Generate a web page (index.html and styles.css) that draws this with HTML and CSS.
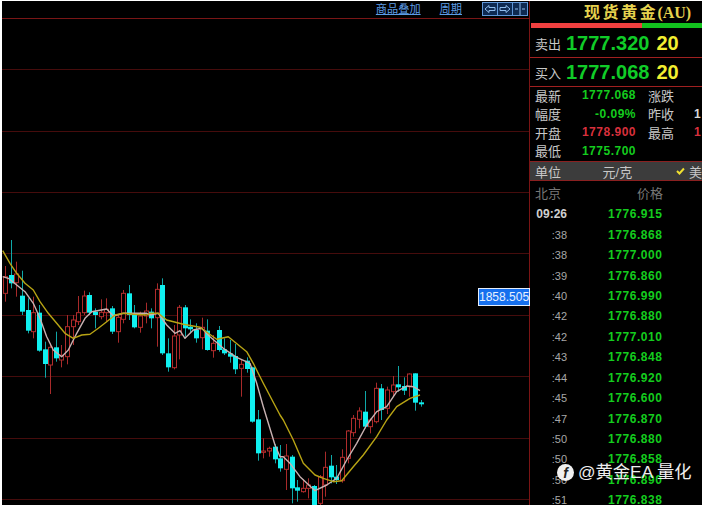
FILE: index.html
```html
<!DOCTYPE html>
<html lang="zh-CN">
<head>
  <meta charset="UTF-8">
  <title>现货黄金</title>
  <link rel="stylesheet" href="styles.css">
</head>
<body>
  <div class="app">

    <!-- K线图 -->
    <div class="chart">
      <div class="toolbar">
        <a class="tool-link">商品叠加</a>
        <a class="tool-link">周期</a>
        <svg class="tool-btns" width="46" height="14" viewBox="0 0 46 14">
          <rect x="0.5" y="0.5" width="15" height="13" class="btn-box"/>
          <rect x="15.5" y="0.5" width="15" height="13" class="btn-box"/>
          <rect x="30.5" y="0.5" width="15" height="13" class="btn-box"/>
          <path d="M3 7 L7 3.5 V5.5 H13 V8.5 H7 V10.5 Z" class="btn-line"/>
          <path d="M28 7 L24 3.5 V5.5 H18 V8.5 H24 V10.5 Z" class="btn-line"/>
          <path d="M33 7 H36 M40 7 H43 M38 1 V13" class="btn-line"/>
        </svg>
      </div>
      <svg id="kline" class="kline" width="527" height="486" viewBox="2 19 527 486"></svg>
      <div class="price-tag">1858.505</div>
    </div>

    <!-- 右侧报价 -->
    <div class="panel">
      <div class="title">现货黄金<span class="title-code">(AU)</span></div>
      <div class="ratio"><div class="ratio-sell"></div><div class="ratio-buy"></div></div>

      <div class="quote">
        <span class="quote-label">卖出</span>
        <span class="quote-price">1777.320</span>
        <span class="quote-size">20</span>
      </div>
      <div class="quote">
        <span class="quote-label">买入</span>
        <span class="quote-price">1777.068</span>
        <span class="quote-size">20</span>
      </div>

      <div class="stats">
        <span>最新</span><b class="green">1777.068</b><i></i><span>涨跌</span><b></b>
        <span>幅度</span><b class="green">-0.09%</b><i></i><span>昨收</span><b class="white">1</b>
        <span>开盘</span><b class="red">1778.900</b><i></i><span>最高</span><b class="red">1</b>
        <span>最低</span><b class="green">1775.700</b><i></i><span></span><b></b>
      </div>

      <div class="unit">
        <span class="unit-name">单位</span>
        <span class="unit-value">元/克</span>
        <svg class="unit-check" width="9" height="8" viewBox="0 0 9 8"><path d="M1 4 L3.5 6.5 L8 1.5"/></svg>
        <span>美</span>
      </div>

      <div class="ticks-head"><span>北京</span><span>价格</span></div>
      <div class="tick"><span class="tick-first">09:26</span><b>1776.915</b></div>
      <div class="tick"><span>:38</span><b>1776.868</b></div>
      <div class="tick"><span>:38</span><b>1777.000</b></div>
      <div class="tick"><span>:39</span><b>1776.860</b></div>
      <div class="tick"><span>:40</span><b>1776.990</b></div>
      <div class="tick"><span>:42</span><b>1776.880</b></div>
      <div class="tick"><span>:42</span><b>1777.010</b></div>
      <div class="tick"><span>:43</span><b>1776.848</b></div>
      <div class="tick"><span>:44</span><b>1776.920</b></div>
      <div class="tick"><span>:45</span><b>1776.600</b></div>
      <div class="tick"><span>:47</span><b>1776.870</b></div>
      <div class="tick"><span>:50</span><b>1776.880</b></div>
      <div class="tick"><span>:50</span><b>1776.858</b></div>
      <div class="tick"><span>:50</span><b>1776.890</b></div>
      <div class="tick"><span>:51</span><b>1776.838</b></div>
    </div>

    <!-- 水印 -->
    <div class="watermark"><span class="wm-logo">f</span>@黄金EA 量化</div>
  </div>

  <script src="chart.js"></script>
</body>
</html>
```

FILE: styles.css
```css
* { margin: 0; padding: 0; box-sizing: border-box; }
body { background: #fff; overflow: hidden; font-family: "Liberation Sans", "Noto Sans CJK SC", sans-serif; }

.app {
  position: relative;
  display: flex;
  width: 700px;
  height: 504px;
  margin: 1px 0 0 2px;
  background: #000;
  overflow: hidden;
}

/* chart */
.chart { position: relative; width: 527px; flex: none; }

.toolbar {
  display: flex;
  justify-content: flex-end;
  align-items: flex-start;
  gap: 19px;
  height: 18px;
  padding-top: 1px;
  padding-right: 1px;
  border-bottom: 1px solid #7a1616;
}

.tool-link {
  font-size: 11.2px;
  line-height: 15px;
  color: #5c9ce6;
  text-decoration: underline;
}

.tool-btns { margin-left: 1px; }
.btn-box { fill: #0e2a52; stroke: #5f96d8; }
.btn-line { fill: none; stroke: #8fbcec; stroke-width: 1; }

.kline { display: block; }

.price-tag {
  position: absolute;
  left: 476px;
  top: 287px;
  width: 52px;
  height: 18px;
  background: #1670ee;
  border: 1px solid #e6eefa;
  color: #e8f2ff;
  font-size: 12px;
  line-height: 16px;
  text-align: center;
  white-space: nowrap;
}

/* quote panel */
.panel {
  flex: 1;
  min-width: 0;
  border-left: 1px solid #7a1414;
  color: #c8c8c8;
  overflow: hidden;
}

.title {
  height: 22px;
  padding-left: 54px;
  color: #e6d24e;
  font-family: "Liberation Serif", "Noto Sans CJK SC", serif;
  font-size: 16px;
  font-weight: bold;
  letter-spacing: 2.6px;
  line-height: 24px;
  white-space: nowrap;
}

.title-code { font-size: 16px; letter-spacing: 0; margin-left: -1px; }

.ratio { display: flex; height: 5px; margin: 0 0 1px 1px; }
.ratio-sell { width: 111px; background: #f04040; }
.ratio-buy { flex: 1; background: #12c21e; }

.quote {
  display: flex;
  align-items: center;
  gap: 5px;
  height: 29px;
  padding: 1px 0 0 5px;
  border-bottom: 1px solid #a02020;
  white-space: nowrap;
}

.quote-label { flex: none; width: 26px; font-size: 13px; }
.quote-price { color: #10cc28; font-size: 20px; font-weight: bold; }
.quote-size { margin-left: 2px; color: #f2ee30; font-size: 20px; font-weight: bold; }

.stats {
  display: grid;
  grid-template-columns: 46px 55px 12px 46px auto;
  grid-auto-rows: 18.5px;
  align-items: center;
  align-content: start;
  height: 75px;
  margin-top: -1px;
  padding-left: 5px;
  font-size: 13px;
}

.stats b { font-size: 12px; text-align: right; letter-spacing: 0.5px; }
.stats b:last-child, .stats i + span + b { text-align: left; }
.green { color: #14cc1e; }
.red { color: #d8303c; }
.white { color: #d8d8d8; }

.unit {
  display: flex;
  align-items: center;
  height: 20px;
  padding-left: 5px;
  background: #3c3c3c;
  border-top: 1px solid #8a2020;
  border-bottom: 1px solid #8a2020;
  font-size: 13px;
  white-space: nowrap;
}

.unit-name { width: 68px; }
.unit-value { width: 74px; }
.unit-check { margin-right: 4px; fill: none; stroke: #f0e030; stroke-width: 2; }

.ticks-head {
  display: flex;
  align-items: center;
  height: 23px;
  padding-left: 5px;
  color: #777;
  font-size: 13px;
}

.ticks-head span:first-child { width: 102px; }

.tick {
  display: flex;
  align-items: center;
  height: 20.45px;
  font-size: 11px;
  color: #a8a8a8;
}

.tick span { width: 37px; text-align: right; }
.tick-first { color: #d0d0d0; font-size: 12px; font-weight: bold; }
.tick b {
  margin-left: 41px;
  color: #14cc1e;
  font-size: 12px;
  letter-spacing: 0.55px;
}

/* watermark */
.watermark {
  position: absolute;
  left: 555px;
  top: 461px;
  display: flex;
  align-items: center;
  gap: 4px;
  color: #eee;
  font-size: 17.3px;
  line-height: 20px;
  white-space: nowrap;
}

.wm-logo {
  width: 17px;
  height: 17px;
  border-radius: 50%;
  background: #f0f0f0;
  color: #222;
  font-size: 14px;
  font-weight: bold;
  font-style: italic;
  line-height: 18px;
  text-align: center;
}
```

FILE: chart.js
```js
const NS = 'http://www.w3.org/2000/svg';
const svg = document.getElementById('kline');

function add(tag, attrs) {
  const el = document.createElementNS(NS, tag);
  for (const k in attrs) el.setAttribute(k, attrs[k]);
  svg.appendChild(el);
}

// grid
[69, 131, 192, 253, 315, 376, 438, 499].forEach(y => {
  add('rect', { x: 2, y: y, width: 527, height: 1, fill: '#460c0c' });
});

// [high, top, bottom, low, up]  1 = red hollow, 0 = cyan filled
const blocks = [
  { ox: 0, oy: 230, rows: [
    [108,140,190,215,1],[30,135,160,175,0],[95,132,158,200,1],[122,197,245,255,0],[205,240,302,310,0],
    [200,248,305,325,1],[225,248,362,365,0],[335,358,402,443,0],[340,352,405,492,1],[305,352,385,395,0],
    [345,376,390,412,1],[255,290,380,403,1],[255,270,290,345,1],[198,248,275,285,1],[182,198,248,255,1],
    [187,195,248,255,0],[235,245,255,295,0],[208,247,260,268,1],[205,238,248,275,1],[228,235,305,312,0],
    [255,262,305,338,1],[180,190,268,280,1],[165,190,255,270,0],[225,255,292,295,0],[245,258,292,308,1],
    [218,243,258,280,1]
  ]},
  { ox: 150, oy: 270, rows: [
    [115,125,145,175,0],[40,58,143,230,1],[25,45,250,255,0],[205,250,292,305,0],[165,198,293,298,1],
    [105,112,195,268,1],[105,112,175,200,0],[148,170,178,190,0],[160,180,205,218,0],[143,172,203,238,1],
    [148,182,240,242,0],[195,220,242,263,1],[168,180,240,245,0],[205,238,250,255,0],[210,250,260,278,0],
    [222,258,298,312,0],[270,283,295,380,1],[262,272,297,308,0],[290,292,455,458,0],[420,448,550,572,0],
    [505,543,547,565,1]
  ]},
  { ox: 270, oy: 350, rows: [
    [290,295,303,320,1],[282,290,328,340,0],[285,325,355,365,0],[282,318,358,420,1],[315,320,415,460,0],
    [390,412,422,455,0],[388,415,425,428,1],[385,405,415,445,1],[405,408,465,465,0],[375,380,460,465,1],
    [305,352,405,440,1],[315,347,382,400,0],[345,380,390,402,0],[298,322,392,398,1],[240,243,325,340,1],
    [195,205,248,260,1],[172,183,208,235,1],[123,185,230,235,0],[205,210,230,250,1],[98,115,215,220,1],
    [102,115,180,210,0],[110,120,175,192,1],[78,105,125,140,1],[48,103,112,125,0],[82,108,122,135,0],
    [70,72,110,140,1],[70,70,158,182,0],[150,157,163,170,0]
  ]}
];

let i = 0;
blocks.forEach(b => {
  b.rows.forEach(r => {
    const x = Math.round(5.2 + 5.615 * i);
    const y = r.slice(0, 4).map(v => b.oy + v / 3);
    const up = r[4] === 1;
    add('rect', { x: x, y: y[0], width: 1, height: y[3] - y[0], fill: up ? '#a82a2a' : '#0fa8a8' });
    if (up) {
      add('rect', { x: x - 1.5, y: y[1], width: 4, height: y[2] - y[1], fill: '#000', stroke: '#b02c2c' });
    } else {
      add('rect', { x: x - 2, y: y[1], width: 5, height: y[2] - y[1], fill: '#10f0f0' });
    }
    i++;
  });
});

// moving averages
function line(parts, color) {
  const pts = [];
  parts.forEach(p => {
    for (let n = 0; n < p.pts.length; n += 2) {
      pts.push((p.ox + p.pts[n] / 3).toFixed(1) + ',' + (p.oy + p.pts[n + 1] / 3).toFixed(1));
    }
  });
  add('polyline', { points: pts.join(' '), fill: 'none', stroke: color, 'stroke-width': 1.4, 'stroke-linejoin': 'round' });
}

line([
  { ox: 0, oy: 230, pts: [8,140,25,145,50,165,75,185,100,220,120,265,140,320,160,360,185,380,205,360,230,310,255,265,275,245,320,237,340,258,370,250,400,250,440,250] },
  { ox: 150, oy: 270, pts: [0,135,25,130,50,165,75,190,90,182,105,205,130,180,155,175,180,200,220,235,260,262,300,280,320,340,340,410,375,525,390,560] },
  { ox: 270, oy: 350, pts: [40,320,60,340,90,380,135,422,170,405,200,385,230,330,260,280,290,225,320,185,350,170,380,125,410,108,430,110,450,122] }
], '#c8b2b2');

line([
  { ox: 0, oy: 230, pts: [8,62,30,100,50,130,75,160,100,180,120,215,145,250,170,280,195,310,220,325,245,315,270,313,295,295,320,275,345,255,370,250,400,253,440,255] },
  { ox: 150, oy: 270, pts: [0,130,25,130,50,150,100,163,150,172,175,190,200,208,235,200,290,245,310,280,340,340,390,435] },
  { ox: 270, oy: 350, pts: [40,210,70,270,100,340,135,375,160,385,190,395,215,392,250,350,280,315,320,260,350,210,380,170,420,145,450,135] }
], '#b8a414');
```
